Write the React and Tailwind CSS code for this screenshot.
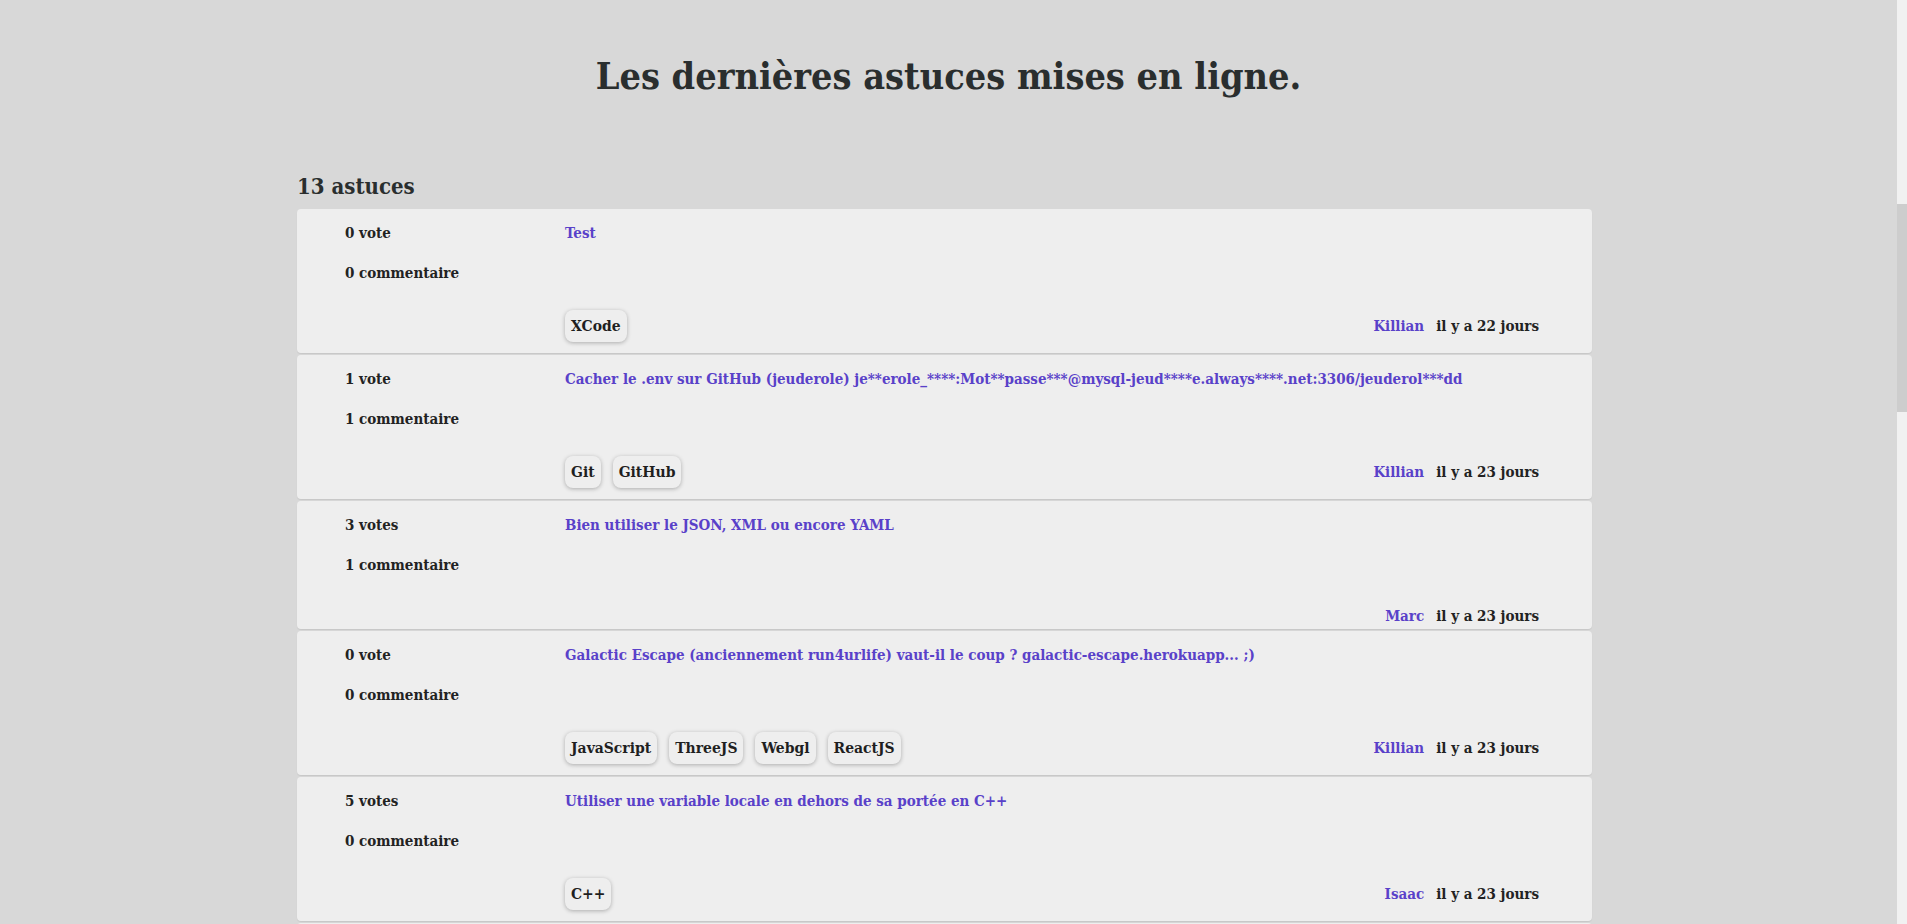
const astuces = [
  {
    votes: "0 vote",
    comments: "0 commentaire",
    title: "Test",
    tags: ["XCode"],
    author: "Killian",
    date: "il y a 22 jours",
  },
  {
    votes: "1 vote",
    comments: "1 commentaire",
    title:
      "Cacher le .env sur GitHub (jeuderole) je**erole_****:Mot**passe***@mysql-jeud****e.always****.net:3306/jeuderol***dd",
    tags: ["Git", "GitHub"],
    author: "Killian",
    date: "il y a 23 jours",
  },
  {
    votes: "3 votes",
    comments: "1 commentaire",
    title: "Bien utiliser le JSON, XML ou encore YAML",
    tags: [],
    author: "Marc",
    date: "il y a 23 jours",
  },
  {
    votes: "0 vote",
    comments: "0 commentaire",
    title:
      "Galactic Escape (anciennement run4urlife) vaut-il le coup ? galactic-escape.herokuapp... ;)",
    tags: ["JavaScript", "ThreeJS", "Webgl", "ReactJS"],
    author: "Killian",
    date: "il y a 23 jours",
  },
  {
    votes: "5 votes",
    comments: "0 commentaire",
    title: "Utiliser une variable locale en dehors de sa portée en C++",
    tags: ["C++"],
    author: "Isaac",
    date: "il y a 23 jours",
  },
  {
    votes: "2 votes",
    comments: "0 commentaire",
    title: "Les hooks React expliqués simplement",
    tags: ["ReactJS"],
    author: "Marc",
    date: "il y a 24 jours",
  },
];

const slab = { fontFamily: '"DejaVu Serif Condensed", "DejaVu Serif", serif' };

const Tag = ({ label }) => (
  <span className="h-[32px] px-[6px] flex items-center rounded-[8px] bg-[#eeeeee] shadow-[0_1px_4px_rgba(0,0,0,0.28)] text-[15.5px] text-[#1f1f1f]">
    {label}
  </span>
);

const Card = ({ astuce }) => {
  const hasTags = astuce.tags.length > 0;
  return (
    <div
      className={
        hasTags
          ? "flex bg-[#eeeeee] rounded-[4px] mb-[2px] shadow-[0_1px_1px_rgba(0,0,0,0.08)] pt-[12px] pb-[11px] pl-[48px] pr-[53px]"
          : "flex bg-[#eeeeee] rounded-[4px] mb-[2px] shadow-[0_1px_1px_rgba(0,0,0,0.08)] pt-[12px] pb-[0px] pl-[48px] pr-[53px]"
      }
    >
      {/* votes / commentaires */}
      <div className="w-[220px] shrink-0 flex flex-col gap-[16px] text-[15px] leading-[24px] text-[#222222]">
        <span>{astuce.votes}</span>
        <span>{astuce.comments}</span>
      </div>

      {/* titre + tags */}
      <div className="flex-1 flex flex-col">
        <a href="#" className="text-[15px] leading-[24px] text-[#5941c9] whitespace-nowrap">
          {astuce.title}
        </a>
        <div
          className={
            hasTags
              ? "mt-[65px] h-[32px] flex items-center justify-between"
              : "mt-[66px] h-[26px] flex items-center justify-between"
          }
        >
          <div className="flex gap-[12px]">
            {astuce.tags.map((t) => (
              <Tag key={t} label={t} />
            ))}
          </div>
          <div className="flex gap-[12px] text-[15px] leading-[24px]">
            <a href="#" className="text-[#5941c9]">{astuce.author}</a>
            <span className="text-[#222222]">{astuce.date}</span>
          </div>
        </div>
      </div>
    </div>
  );
};

export default function App() {
  return (
    <div className="h-screen overflow-hidden flex bg-[#d8d8d8] font-bold" style={slab}>
      <main className="flex-1 min-w-0">
        <h1 className="pt-[52px] text-center text-[37.5px] leading-[48px] text-[#2a2e2e]">
          Les dernières astuces mises en ligne.
        </h1>

        <section className="ml-[297px] w-[1295px] mt-[70px]">
          <h2 className="text-[22px] leading-[32px] text-[#2a2e2e] mb-[7px]">13 astuces</h2>
          <div className="flex flex-col">
            {astuces.map((a, i) => (
              <Card key={i} astuce={a} />
            ))}
          </div>
        </section>
      </main>

      {/* barre de défilement */}
      <div className="w-[10px] shrink-0 bg-[#f1f1f1] flex flex-col">
        <div className="h-[204px]" />
        <div className="h-[208px] bg-[#cdcdcd]" />
      </div>
    </div>
  );
}
